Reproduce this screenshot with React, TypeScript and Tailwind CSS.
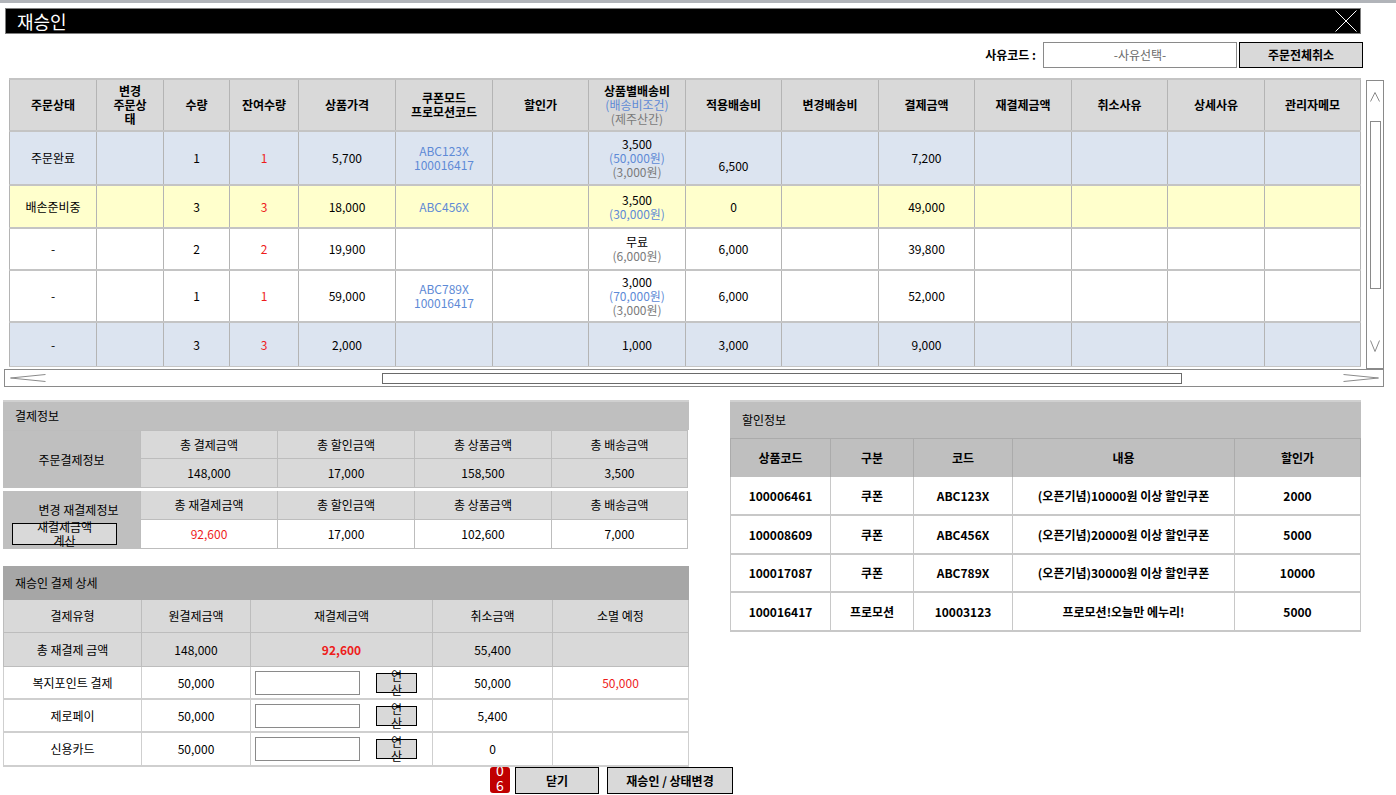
import React from "react";

const cols = [87, 67, 66, 69, 97, 97, 96, 97, 96, 97, 96, 97, 96, 97, 96];

type Cell = React.ReactNode;

const blue = "text-[#5e8ad6]";
const gray = "text-[#7a7a7a]";
const red = "text-[#ee1c1c]";

const rows: { bg: string; h: string; cells: Cell[] }[] = [
  {
    bg: "bg-[#dce4f0]",
    h: "h-[54px]",
    cells: [
      "주문완료",
      "",
      "1",
      <span className={red}>1</span>,
      "5,700",
      <span className={blue}>ABC123X<br />100016417</span>,
      "",
      <span>3,500<br /><span className={blue}>(50,000원)</span><br /><span className={gray}>(3,000원)</span></span>,
      <span className="inline-block pt-[16px]">6,500</span>,
      "",
      "7,200",
      "",
      "",
      "",
      "",
    ],
  },
  {
    bg: "bg-[#ffffcc]",
    h: "h-[43px]",
    cells: [
      "배손준비중",
      "",
      "3",
      <span className={red}>3</span>,
      "18,000",
      <span className={blue}>ABC456X</span>,
      "",
      <span>3,500<br /><span className={blue}>(30,000원)</span></span>,
      "0",
      "",
      "49,000",
      "",
      "",
      "",
      "",
    ],
  },
  {
    bg: "bg-white",
    h: "h-[42px]",
    cells: [
      "-",
      "",
      "2",
      <span className={red}>2</span>,
      "19,900",
      "",
      "",
      <span>무료<br /><span className={gray}>(6,000원)</span></span>,
      "6,000",
      "",
      "39,800",
      "",
      "",
      "",
      "",
    ],
  },
  {
    bg: "bg-white",
    h: "h-[52px]",
    cells: [
      "-",
      "",
      "1",
      <span className={red}>1</span>,
      "59,000",
      <span className={blue}>ABC789X<br />100016417</span>,
      "",
      <span>3,000<br /><span className={blue}>(70,000원)</span><br /><span className={gray}>(3,000원)</span></span>,
      "6,000",
      "",
      "52,000",
      "",
      "",
      "",
      "",
    ],
  },
  {
    bg: "bg-[#dce4f0]",
    h: "h-[45px]",
    cells: [
      "-",
      "",
      "3",
      <span className={red}>3</span>,
      "2,000",
      "",
      "",
      "1,000",
      "3,000",
      "",
      "9,000",
      "",
      "",
      "",
      "",
    ],
  },
];

const headers: Cell[] = [
  "주문상태",
  <span>변경<br />주문상<br />태</span>,
  "수량",
  "잔여수량",
  "상품가격",
  <span>쿠폰모드<br />프로모션코드</span>,
  "할인가",
  <span>상품별배송비<br /><span className={`${blue} font-normal`}>(배송비조건)</span><br /><span className={`${gray} font-normal`}>(제주산간)</span></span>,
  "적용배송비",
  "변경배송비",
  "결제금액",
  "재결제금액",
  "취소사유",
  "상세사유",
  "관리자메모",
];

function OrderTable() {
  return (
    <table className="table-fixed border-collapse w-[1351px]">
      <colgroup>
        {cols.map((w, i) => (
          <col key={i} style={{ width: w }} />
        ))}
      </colgroup>
      <thead>
        <tr className="h-[52px] bg-[#d9d9d9]">
          {headers.map((h, i) => (
            <th
              key={i}
              className="border-x border-[#b4b4b4] border-t-2 border-t-[#c4c4c4] border-b-2 border-b-[#c4c4c4] text-center align-middle text-[12px] leading-[14px] font-bold text-black p-0"
            >
              {h}
            </th>
          ))}
        </tr>
      </thead>
      <tbody>
        {rows.map((r, ri) => (
          <tr key={ri} className={`${r.bg} ${r.h}`}>
            {r.cells.map((c, ci) => (
              <td
                key={ci}
                className="border-x border-[#b4b4b4] border-b-2 border-b-[#c4c4c4] text-center align-middle text-[12px] leading-[14px] text-black p-0"
              >
                {c}
              </td>
            ))}
          </tr>
        ))}
      </tbody>
    </table>
  );
}

function PaymentInfo() {
  const hc = "bg-[#d9d9d9] border-l border-b border-[#bdbdbd] flex items-center justify-center text-[12px] leading-[14px]";
  return (
    <div className="w-[686px] border-t-2 border-[#d0d0d0]">
      <div className="h-[28px] bg-[#bfbfbf] flex items-center pl-[12px] text-[12px] leading-[14px]">결제정보</div>
      <div className="grid grid-cols-[137px_137px_137px_137px_137px] grid-rows-[29px_29px]">
        <div className="row-span-2 bg-[#bfbfbf] flex items-center justify-center text-[12px] leading-[14px] border-t border-[#bdbdbd]">주문결제정보</div>
        <div className={`${hc} border-t`}>총 결제금액</div>
        <div className={`${hc} border-t`}>총 할인금액</div>
        <div className={`${hc} border-t`}>총 상품금액</div>
        <div className={`${hc} border-t border-r`}>총 배송금액</div>
        <div className={hc}>148,000</div>
        <div className={hc}>17,000</div>
        <div className={hc}>158,500</div>
        <div className={`${hc} border-r`}>3,500</div>
      </div>
      <div className="h-[3px] bg-white" />
      <div className="grid grid-cols-[137px_137px_137px_137px_137px] grid-rows-[29px_29px]">
        <div className="row-span-2 bg-[#bfbfbf] flex flex-col items-center pt-[12px] text-[12px] leading-[14px]">
          <span className="pl-[14px]">변경 재결제정보</span>
          <button className="self-start ml-[9px] mt-[6px] w-[105px] h-[22px] bg-[#d9d9d9] border border-black flex items-center justify-center text-[12px] leading-[14px] overflow-visible p-0">
            <span>재결제금액<br />계산</span>
          </button>
        </div>
        <div className={hc}>총 재결제금액</div>
        <div className={hc}>총 할인금액</div>
        <div className={hc}>총 상품금액</div>
        <div className={`${hc} border-r`}>총 배송금액</div>
        <div className="bg-white border-l border-b border-[#bdbdbd] flex items-center justify-center text-[12px] leading-[14px] text-[#ee1c1c]">92,600</div>
        <div className="bg-white border-l border-b border-[#bdbdbd] flex items-center justify-center text-[12px] leading-[14px]">17,000</div>
        <div className="bg-white border-l border-b border-[#bdbdbd] flex items-center justify-center text-[12px] leading-[14px]">102,600</div>
        <div className="bg-white border-l border-b border-r border-[#bdbdbd] flex items-center justify-center text-[12px] leading-[14px]">7,000</div>
      </div>
    </div>
  );
}

function CalcRow({ type, orig, cancel, expire }: { type: string; orig: string; cancel: string; expire?: string }) {
  const c = "border-l border-b-2 border-[#cfcfcf] flex items-center justify-center text-[12px] leading-[14px]";
  return (
    <>
      <div className={c}>{type}</div>
      <div className={c}>{orig}</div>
      <div className={`${c} justify-start pl-[4px]`}>
        <div className="w-[105px] h-[24px] border border-[#8a8a8a] bg-white" />
        <button className="ml-[16px] w-[41px] h-[20px] bg-[#d9d9d9] border border-black flex items-center justify-center text-[12px] leading-[14px] overflow-visible p-0">
          <span>연<br />산</span>
        </button>
      </div>
      <div className={c}>{cancel}</div>
      <div className={`${c} border-r text-[#ee1c1c]`}>{expire ?? ""}</div>
    </>
  );
}

function ReapprovalDetail() {
  const hc = "bg-[#d9d9d9] border-l border-b border-[#bdbdbd] flex items-center justify-center text-[12px] leading-[14px]";
  return (
    <div className="w-[686px] mt-[17px]">
      <div className="h-[34px] bg-[#a6a6a6] flex items-center pl-[12px] text-[12px] leading-[14px]">재승인 결제 상세</div>
      <div className="grid grid-cols-[138px_109px_182px_120px_137px] grid-rows-[33px_34px_33px_33px_34px]">
        <div className={hc}>결제유형</div>
        <div className={hc}>원결제금액</div>
        <div className={hc}>재결제금액</div>
        <div className={hc}>취소금액</div>
        <div className={`${hc} border-r`}>소멸 예정</div>
        <div className={hc}>총 재결제 금액</div>
        <div className={hc}>148,000</div>
        <div className={`${hc} text-[#ee1c1c] font-bold`}>92,600</div>
        <div className={hc}>55,400</div>
        <div className={`${hc} border-r`}></div>
        <CalcRow type="복지포인트 결제" orig="50,000" cancel="50,000" expire="50,000" />
        <CalcRow type="제로페이" orig="50,000" cancel="5,400" />
        <CalcRow type="신용카드" orig="50,000" cancel="0" />
      </div>
    </div>
  );
}

function DiscountInfo() {
  const data = [
    ["100006461", "쿠폰", "ABC123X", "(오픈기념)10000원 이상 할인쿠폰", "2000"],
    ["100008609", "쿠폰", "ABC456X", "(오픈기념)20000원 이상 할인쿠폰", "5000"],
    ["100017087", "쿠폰", "ABC789X", "(오픈기념)30000원 이상 할인쿠폰", "10000"],
    ["100016417", "프로모션", "10003123", "프로모션!오늘만 에누리!", "5000"],
  ];
  const heads = ["상품코드", "구분", "코드", "내용", "할인가"];
  return (
    <div className="w-[631px] border-t-2 border-[#d0d0d0]">
      <div className="h-[36px] bg-[#bfbfbf] flex items-center pl-[12px] text-[12px] leading-[14px]">할인정보</div>
      <div className="grid grid-cols-[100px_83px_99px_222px_127px] grid-rows-[39px_39px_39px_38px_39px]">
        {heads.map((h, i) => (
          <div
            key={h}
            className={`bg-[#bfbfbf] border-l border-t border-[#ababab] flex items-center justify-center text-[12px] leading-[14px] font-bold ${i === 4 ? "border-r" : ""}`}
          >
            {h}
          </div>
        ))}
        {data.map((r, ri) =>
          r.map((v, ci) => (
            <div
              key={`${ri}-${ci}`}
              className={`bg-white border-l border-b-2 border-[#c8c8c8] flex items-center justify-center text-[12px] leading-[14px] font-bold ${ci === 4 ? "border-r" : ""}`}
            >
              {v}
            </div>
          ))
        )}
      </div>
    </div>
  );
}

export default function App() {
  return (
    <div className="w-[1396px] h-[795px] bg-white overflow-hidden font-['Noto_Sans_CJK_KR',sans-serif] text-black">
      <div className="h-[3px] bg-[#b1b4b9]" />
      {/* Title bar */}
      <div className="mt-[5px] ml-[5px] w-[1356px] h-[26px] bg-black border border-[#7f7f7f] flex items-center justify-between">
        <span className="pl-[11px] text-white text-[18px] leading-[22px]">재승인</span>
        <svg width="22" height="22" viewBox="0 0 22 22" className="mr-[3px]">
          <line x1="0.5" y1="0.5" x2="21.5" y2="21.5" stroke="#ffffff" strokeWidth="1" />
          <line x1="21.5" y1="0.5" x2="0.5" y2="21.5" stroke="#ffffff" strokeWidth="1" />
        </svg>
      </div>
      {/* Reason row */}
      <div className="mt-[8px] flex justify-end items-center pr-[33px] h-[26px]">
        <span className="text-[12px] leading-[14px] font-bold mr-[7px]">사유코드 :</span>
        <div className="w-[194px] h-[26px] border border-[#8a8a8a] flex items-center justify-center text-[12px] leading-[14px] text-[#6a6a6a]">-사유선택-</div>
        <button className="ml-[2px] w-[124px] h-[26px] bg-[#d9d9d9] border border-black text-[12px] leading-[14px] font-bold">주문전체취소</button>
      </div>
      {/* Order table with scrollbars */}
      <div className="mt-[10px] ml-[4px] w-[1380px]">
        <div className="flex h-[291px]">
          <div className="pl-[5px] w-[1362px] h-[289px] overflow-hidden">
            <OrderTable />
          </div>
          <div className="mt-[2px] w-[18px] h-[289px] border border-[#8a8a8a] flex flex-col items-center">
            <svg width="10" height="10" viewBox="0 0 10 10" className="mt-[11px]">
              <polyline points="0.5,9.5 5,0.5 9.5,9.5" fill="none" stroke="#8a8a8a" strokeWidth="1" />
            </svg>
            <div className="mt-[19px] w-[11px] h-[168px] border border-[#8a8a8a]" />
            <svg width="10" height="12" viewBox="0 0 10 12" className="mt-[51px]">
              <polyline points="0.5,0.5 5,11.5 9.5,0.5" fill="none" stroke="#8a8a8a" strokeWidth="1" />
            </svg>
          </div>
        </div>
        <div className="h-[18px] w-[1380px] border border-[#8a8a8a] flex items-center">
          <svg width="36" height="8" viewBox="0 0 36 8" className="ml-[5px]">
            <polyline points="35.5,0.5 0.5,4 35.5,7.5" fill="none" stroke="#8a8a8a" strokeWidth="1" />
          </svg>
          <div className="ml-[336px] w-[800px] h-[11px] border border-[#6a6a6a]" />
          <svg width="36" height="8" viewBox="0 0 36 8" className="ml-[161px]">
            <polyline points="0.5,0.5 35.5,4 0.5,7.5" fill="none" stroke="#8a8a8a" strokeWidth="1" />
          </svg>
        </div>
      </div>
      {/* Lower section */}
      <div className="mt-[13px] ml-[3px] flex items-start">
        <div className="flex flex-col">
          <PaymentInfo />
          <ReapprovalDetail />
        </div>
        <div className="ml-[41px]">
          <DiscountInfo />
        </div>
      </div>
      {/* Bottom buttons */}
      <div className="ml-[490px] flex items-start">
        <div className="w-[20px] h-[26px] bg-[#c00000] rounded-[3px] text-white text-[14px] leading-[13px] flex flex-col items-center overflow-hidden">
          <span className="-mt-[3px]">0</span>
          <span className="mt-[2px]">6</span>
        </div>
        <button className="ml-[5px] w-[84px] h-[27px] bg-[#d9d9d9] border border-black text-[12px] leading-[14px] font-bold">닫기</button>
        <button className="ml-[8px] w-[126px] h-[27px] bg-[#d9d9d9] border border-black text-[12px] leading-[14px] font-bold">재승인 / 상태변경</button>
      </div>
    </div>
  );
}
